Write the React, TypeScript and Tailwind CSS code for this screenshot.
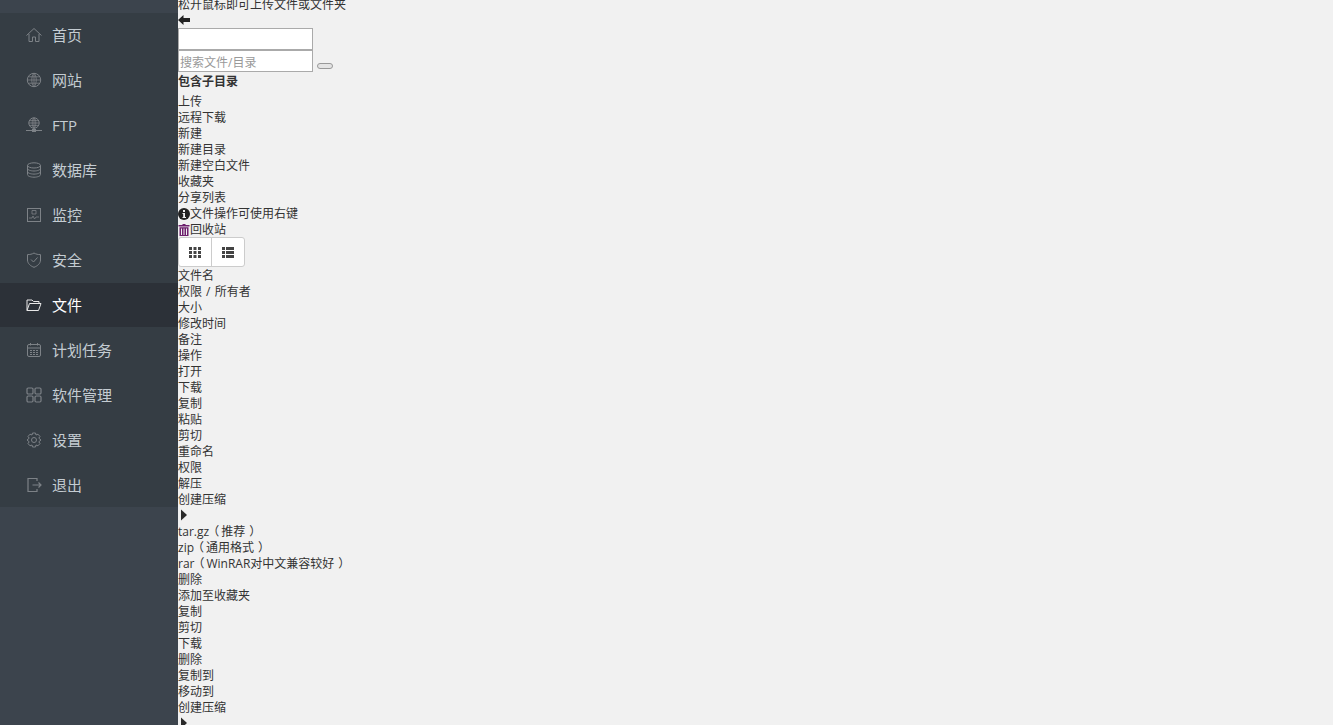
import React from "react";

const S = "#7d8287";
const svg = (c: React.ReactNode, color = S) => (
  <svg width="16" height="16" viewBox="0 0 16 16" fill="none" stroke={color} strokeWidth="1" className="shrink-0">{c}</svg>
);
const icons: Record<string, (c?: string) => React.ReactNode> = {
  home: (c) => svg(<path d="M0.5 8.500L8 1.500L15.500 8.500M3 7V14.500H6.500V10H9.500V14.500H13V7" />, c),
  globe: (c) => svg(<><circle cx="8" cy="8" r="6.700" /><path d="M1.300 8H14.700M2.300 4.800H13.700M2.300 11.200H13.700M8 1.300V14.700M8 1.300C5 4 5 12 8 14.700M8 1.300C11 4 11 12 8 14.700" strokeWidth=".8" /></>, c),
  ftp: (c) => svg(<><circle cx="8" cy="6" r="5.200" /><path d="M2.800 6H13.200M3.600 3.600H12.400M3.600 8.400H12.400M8 .8V11.200M8 .8C5.600 3 5.600 9 8 11.200M8 .8C10.400 3 10.400 9 8 11.200" strokeWidth=".8" /><path d="M0 13.500H16M8 11V13.500" /><rect x="6.500" y="12.500" width="3" height="2" fill={c} /></>, c),
  db: (c) => svg(<><ellipse cx="8" cy="3.400" rx="6.500" ry="2.600" /><path d="M1.500 3.400V12.600C1.500 14 4.400 15.200 8 15.200S14.500 14 14.500 12.600V3.400M1.500 6.400C1.500 7.800 4.400 9 8 9S14.500 7.800 14.500 6.400M1.500 9.500C1.500 10.900 4.400 12.100 8 12.100S14.500 10.900 14.500 9.500" /></>, c),
  mon: (c) => svg(<><rect x="1.500" y="1.500" width="13" height="13" /><path d="M3 11H6L7 9L8.500 12L10 10H13M6 3.500H10V7H6Z" strokeWidth=".8" /></>, c),
  shield: (c) => svg(<><path d="M8 1C10 2.200 12 2.600 14.500 2.600V8C14.500 11.500 11.500 14 8 15.300C4.500 14 1.500 11.500 1.500 8V2.600C4 2.600 6 2.200 8 1Z" /><path d="M5 7.500L7.500 10L11.500 5.500" /></>, c),
  folder: (c) => svg(<path d="M1 13.500V3H6L7.500 4.500H13V6.500M1 13.500H12.500L15 6.500H3.500L1 13.500Z" />, c),
  cal: (c) => svg(<><rect x="1.500" y="2.500" width="13" height="12" rx="1.500" /><path d="M1.500 6H14.500M4.500 1V3.500M11.500 1V3.500" /><path d="M4 8.500H12M4 10.500H12M4 12.500H12" strokeDasharray="2 1" /></>, c),
  apps: (c) => svg(<><rect x="1" y="1" width="6" height="6" rx="1.200" strokeWidth="1.200" /><rect x="9" y="1" width="6" height="6" rx="1.200" strokeWidth="1.200" /><rect x="1" y="9" width="6" height="6" rx="1.200" strokeWidth="1.200" /><rect x="9" y="9" width="6" height="6" rx="1.200" strokeWidth="1.200" /></>, c),
  gear: (c) => svg(<><circle cx="8" cy="8" r="2.500" /><path d="M6.500 1H9.500L10 3L12 2.200L14 4.500L12.800 6.200L15 8L12.800 9.800L14 11.500L12 13.800L10 13L9.500 15H6.500L6 13L4 13.800L2 11.500L3.200 9.800L1 8L3.200 6.200L2 4.500L4 2.200L6 3Z" /></>, c),
  exit: (c) => svg(<path d="M11 4V1.500H2V14.500H11V12M6.500 8H15M12.500 5.500L15 8L12.500 10.500" strokeWidth="1.200" />, c),
};

const nav: [string, string][] = [
  ["home", "首页"], ["globe", "网站"], ["ftp", "FTP"], ["db", "数据库"], ["mon", "监控"], ["shield", "安全"],
  ["folder", "文件"], ["cal", "计划任务"], ["apps", "软件管理"], ["gear", "设置"], ["exit", "退出"],
];

const Line = ({ children }: { children: React.ReactNode }) => (
  <div className="h-4 leading-[18px] whitespace-nowrap [word-spacing:1px]">{children}</div>
);

const Caret = () => (
  <svg width="12" height="16" viewBox="0 0 12 16" className="block"><path d="M3 2.500L9 8L3 13.500Z" fill="#2a2a2a" /></svg>
);

const Open = () => <span className="inline-block w-3 -translate-x-[2px]">（</span>;
const Close = () => <span className="inline-block w-3 translate-x-1">）</span>;

const a = ["上传", "远程下载", "新建", "新建目录", "新建空白文件", "收藏夹", "分享列表"];
const b = ["文件名", "权限 / 所有者", "大小", "修改时间", "备注", "操作", "打开", "下载", "复制", "粘贴", "剪切", "重命名", "权限", "解压", "创建压缩"];
const c: React.ReactNode[] = [
  <>tar.gz<Open />推荐<Close /></>,
  <>zip<Open />通用格式<Close /></>,
  <>rar<Open />WinRAR对中文兼容较好<Close /></>,
  "删除", "添加至收藏夹", "复制", "剪切", "下载", "删除", "复制到", "移动到", "创建压缩",
];

export default function App() {
  return (
    <div className="flex h-[725px] w-[1333px] overflow-hidden bg-[#f1f1f1] text-xs text-[#333] font-['Open_Sans','Noto_Sans_CJK_SC',sans-serif]">
      <aside className="w-[178px] shrink-0 bg-[#3c444d] pt-[13px]">
        <nav className="bg-[#353d44]">
          {nav.map(([k, t], i) => {
            const on = t === "文件";
            return (
              <div
                key={t}
                className={`flex items-center gap-[10px] pl-[26px] text-[15px] ${
                  on ? "h-[44px] bg-[#2c3138] pb-px text-white" : i < 6 ? "h-[45px] pb-[2px] text-[#c4ccd2]" : "h-[45px] text-[#c4ccd2]"
                }`}
              >
                {icons[k](on ? "#e8e8e8" : S)}
                <span>{t}</span>
              </div>
            );
          })}
        </nav>
      </aside>
      <main className="-mt-1 flex-1">
        <Line>松开鼠标即可上传文件或文件夹</Line>
        <div className="flex h-4 items-center">
          <svg width="12" height="12" viewBox="0 0 12 12"><path d="M0 6L5.500 1V4H12V8H5.500V11Z" fill="#222" /></svg>
        </div>
        <input className="block h-[22px] w-[135px] border border-[#aaa] bg-white" />
        <div className="flex items-end">
          <input placeholder="搜索文件/目录" className="block h-[22px] w-[135px] border border-[#aaa] bg-white px-px pt-[2px] text-xs placeholder:text-[#999]" />
          <button className="mb-[3px] ml-1 h-[6px] w-4 rounded-sm border border-[#999] bg-[#e4e4e4]" />
        </div>
        <div className="mb-1 mt-px h-4 font-bold leading-[18px]">包含子目录</div>
        {a.map((t) => <Line key={t}>{t}</Line>)}
        <Line>
          <span className="flex items-center">
            <svg width="12" height="12" viewBox="0 0 12 12"><circle cx="6" cy="6" r="6" fill="#222" /><rect x="5" y="2" width="2" height="2" fill="#f1f1f1" /><path d="M4.500 5H7V9H8V10H4.500V9H5.200V6H4.500Z" fill="#f1f1f1" /></svg>
            文件操作可使用右键
          </span>
        </Line>
        <Line>
          <span className="flex items-center">
            <svg width="12" height="12" viewBox="0 0 12 12" fill="#6d1f6d"><path d="M4.500 0H7.500V1H11.500V2.500H.5V1H4.500ZM1.500 3.200H10.500V12H1.500ZM3 4.500V11H4V4.500ZM5.500 4.500V11H6.500V4.500ZM8 4.500V11H9V4.500Z" fillRule="evenodd" /></svg>
            回收站
          </span>
        </Line>
        <div className="flex h-[30px] w-[67px] overflow-hidden rounded-[3px] border border-[#ccc] bg-white">
          <div className="flex flex-1 items-center justify-center border-r border-[#ccc]">
            <svg width="12" height="11" viewBox="0 0 12 11" fill="#444"><path d="M0 0H3V3H0ZM4.500 0H7.500V3H4.500ZM9 0H12V3H9ZM0 4H3V7H0ZM4.500 4H7.500V7H4.500ZM9 4H12V7H9ZM0 8H3V11H0ZM4.500 8H7.500V11H4.500ZM9 8H12V11H9Z" /></svg>
          </div>
          <div className="flex flex-1 items-center justify-center">
            <svg width="12" height="11" viewBox="0 0 12 11" fill="#444"><path d="M0 0H3V3H0ZM4 0H12V3H4ZM0 4H3V7H0ZM4 4H12V7H4ZM0 8H3V11H0ZM4 8H12V11H4Z" /></svg>
          </div>
        </div>
        {b.map((t, i) => <Line key={i}>{t}</Line>)}
        <Caret />
        {c.map((t, i) => <Line key={i}>{t}</Line>)}
        <Caret />
      </main>
    </div>
  );
}
